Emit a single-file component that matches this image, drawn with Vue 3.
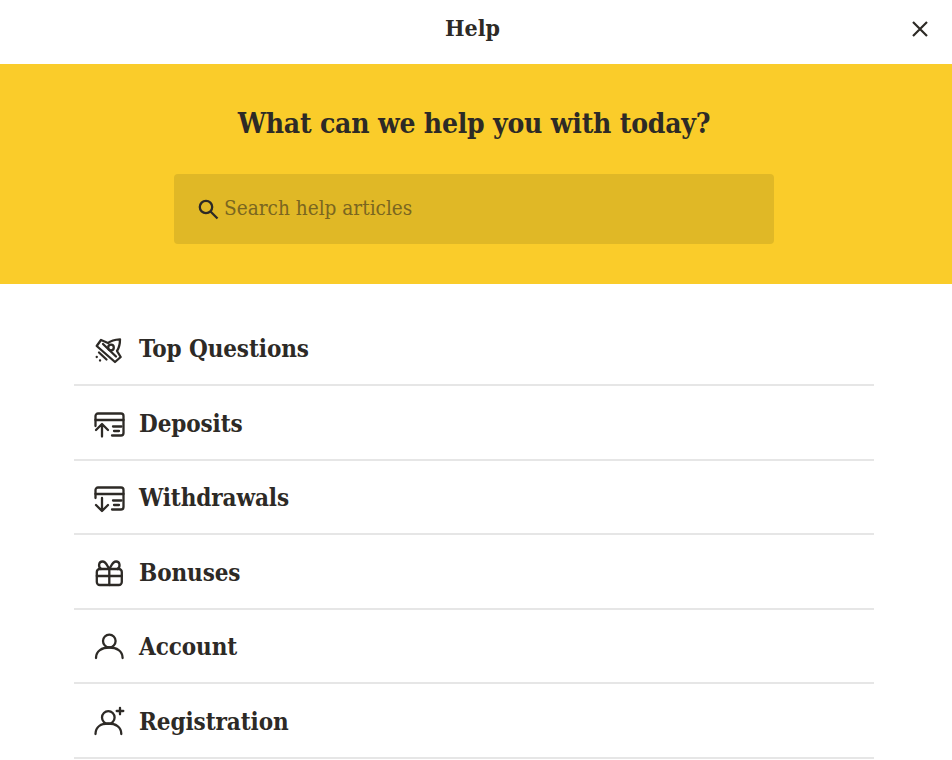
<script setup>
const items = [
  { label: 'Top Questions', icon: 'rocket' },
  { label: 'Deposits', icon: 'deposit' },
  { label: 'Withdrawals', icon: 'withdraw' },
  { label: 'Bonuses', icon: 'gift' },
  { label: 'Account', icon: 'user' },
  { label: 'Registration', icon: 'userplus' },
]
</script>

<template>
  <div class="page">
    <header class="top">
      <span class="title">Help</span>
      <svg class="close" width="24" height="24" viewBox="0 0 24 24" fill="none" stroke="#2d2a26" stroke-width="2.2"><path d="M5 5l14 14M19 5L5 19"/></svg>
    </header>
    <section class="hero">
      <h1>What can we help you with today?</h1>
      <div class="search">
        <svg width="24" height="24" viewBox="0 0 24 24" fill="none" stroke="#2d2a26" stroke-width="2.3"><circle cx="10" cy="10" r="6.200"/><path d="M14.500 14.500l7 7"/></svg>
        <span>Search help articles</span>
      </div>
    </section>
    <ul class="list">
      <li v-for="it in items" :key="it.label">
        <svg class="ico" width="32" height="32" viewBox="0 0 32 32" fill="none" stroke="#2d2a26" stroke-width="2.3" stroke-linejoin="round" stroke-linecap="round">
          <template v-if="it.icon === 'rocket'">
            <path d="M3.700 12L8 6l7 3c3-2.500 8-3.500 12-3.700 0 4.700-1 8.700-3 11.700l3.700 6-5.700 5L3.700 12z"/><circle cx="18" cy="13.500" r="2.800"/><path d="M10 10l13 12.500M6 18.500l7.500 7M3.700 23h.1M7 26.500h.1"/>
          </template>
          <template v-else-if="it.icon === 'deposit'">
            <path d="M2.500 18V8a2.500 2.500 0 0 1 2.500-2.500h23A2.500 2.500 0 0 1 30.500 8v17a2.500 2.500 0 0 1-2.500 2.500h-9"/><path d="M2.500 12h28M9 28.500V16.500M3 22l6-6 6 6M20 18.500h8.500M21 23h5"/>
          </template>
          <template v-else-if="it.icon === 'withdraw'">
            <path d="M2.500 15V7a2.500 2.500 0 0 1 2.500-2.500h23a2.500 2.500 0 0 1 2.500 2.500v17a2.500 2.500 0 0 1-2.500 2.500h-9"/><path d="M2.500 11h28M9 15v13M3 22l6 6 6-6M20 17.500h8.500M21 22h5"/>
          </template>
          <template v-else-if="it.icon === 'gift'">
            <rect x="3.800" y="12" width="25" height="16" rx="3"/><path d="M3.800 19h25M16.300 12v16M16.300 12c-2-2.500-3-7.500-6.800-7.500-4 0-4.500 5-1.500 7.500M16.300 12c2-2.500 3-7.500 6.800-7.500 4 0 4.500 5 1.500 7.500"/>
          </template>
          <template v-else-if="it.icon === 'user'">
            <circle cx="16.300" cy="9" r="6.300"/><path d="M3 26c0-7 6-10.500 13.300-10.500S29.600 19 29.600 26"/>
          </template>
          <template v-else>
            <circle cx="15.300" cy="11.500" r="6.300"/><path d="M2.500 28c0-7 5.500-10.500 12.800-10.500S28.300 21 28.300 28"/><path d="M27 1.800v6.500M23.700 5h6.600"/>
          </template>
        </svg>
        <span>{{ it.label }}</span>
      </li>
    </ul>
  </div>
</template>

<style>
body { background: #fff; }
</style>

<style scoped>
.page { width: 952px; height: 760px; overflow: hidden; font-family: "DejaVu Serif Condensed", "DejaVu Serif", serif; color: #2d2a26; background: #fff; }
.top { height: 64px; display: flex; align-items: center; justify-content: center; position: relative; padding-bottom: 9px; box-sizing: border-box; }
.title { font-weight: 700; font-size: 23px; margin-left: -7px; }
.close { position: absolute; right: 20px; top: 17px; }
.hero { height: 220px; background: #facc2a; display: flex; flex-direction: column; align-items: center; padding: 39px 4px 0 0; box-sizing: border-box; }
h1 { margin: 0 0 29px; font-size: 28px; line-height: 42px; font-weight: 700; letter-spacing: -0.2px; }
.search { width: 600px; height: 70px; background: #e0b826; border-radius: 4px; display: flex; align-items: center; padding-left: 22px; gap: 4px; box-sizing: border-box; font-size: 20.6px; color: #7a6620; }
.search span { margin-top: -2px; }
.list { list-style: none; margin: 0 0 0 74px; padding: 27.5px 0 0; width: 800px; }
li { height: 74.5px; box-sizing: border-box; border-bottom: 2px solid #e6e6e6; display: flex; align-items: center; padding: 2px 0 0 19px; gap: 14px; font-size: 24px; font-weight: 700; letter-spacing: -0.1px; }
.ico { flex: none; margin-top: 2px; }
</style>
